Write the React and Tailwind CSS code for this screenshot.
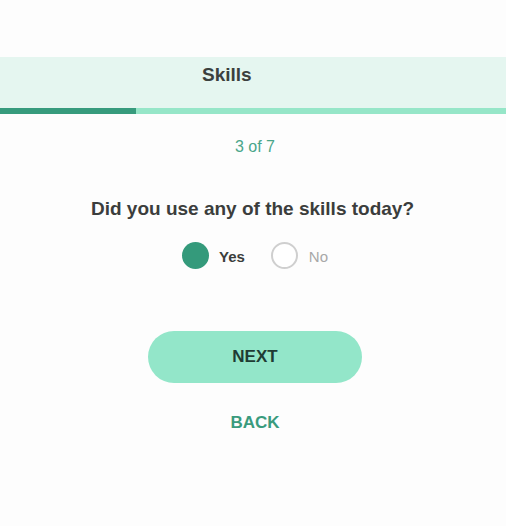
export default function App() {
  return (
    <div className="min-h-[526px] w-full bg-[#fdfdfd] font-['Liberation_Sans',Arial,sans-serif]">
      <div className="h-[57px]" />
      <div className="h-[51px] bg-[#e5f6f0] pl-[202px] pt-[7px]">
        <span className="text-[19px] leading-[22px] font-bold text-[#3b403e]">Skills</span>
      </div>
      <div className="flex h-[6px]">
        <div className="w-[136px] bg-[#379b7d]" />
        <div className="flex-1 bg-[#96e6c8]" />
      </div>
      <div className="flex flex-col items-center pl-[4px]">
        <div className="mt-[23px] text-[16px] leading-[20px] text-[#4aa68a]">3 of 7</div>
        <div className="mt-[40px] text-[19px] leading-[24px] font-bold text-[#3b3d3c] -ml-[5px]">
          Did you use any of the skills today?
        </div>
        <div className="mt-[21px] flex items-center">
          <span className="h-[27px] w-[27px] rounded-full bg-[#349a7b]" />
          <span className="ml-[10px] mt-[3px] text-[15px] font-bold text-[#3b3d3c]">Yes</span>
          <span className="ml-[26px] h-[27px] w-[27px] rounded-full border-2 border-[#cfcfcf] bg-white" />
          <span className="ml-[11px] mt-[3px] text-[15px] text-[#a8a8a8]">No</span>
        </div>
        <button className="mt-[62px] h-[52px] w-[214px] rounded-full bg-[#93e6c9] text-[17px] font-bold text-[#1f3c34]">
          NEXT
        </button>
        <div className="mt-[28px] text-[17px] leading-[24px] font-bold text-[#3a9b7d]">BACK</div>
      </div>
    </div>
  );
}
